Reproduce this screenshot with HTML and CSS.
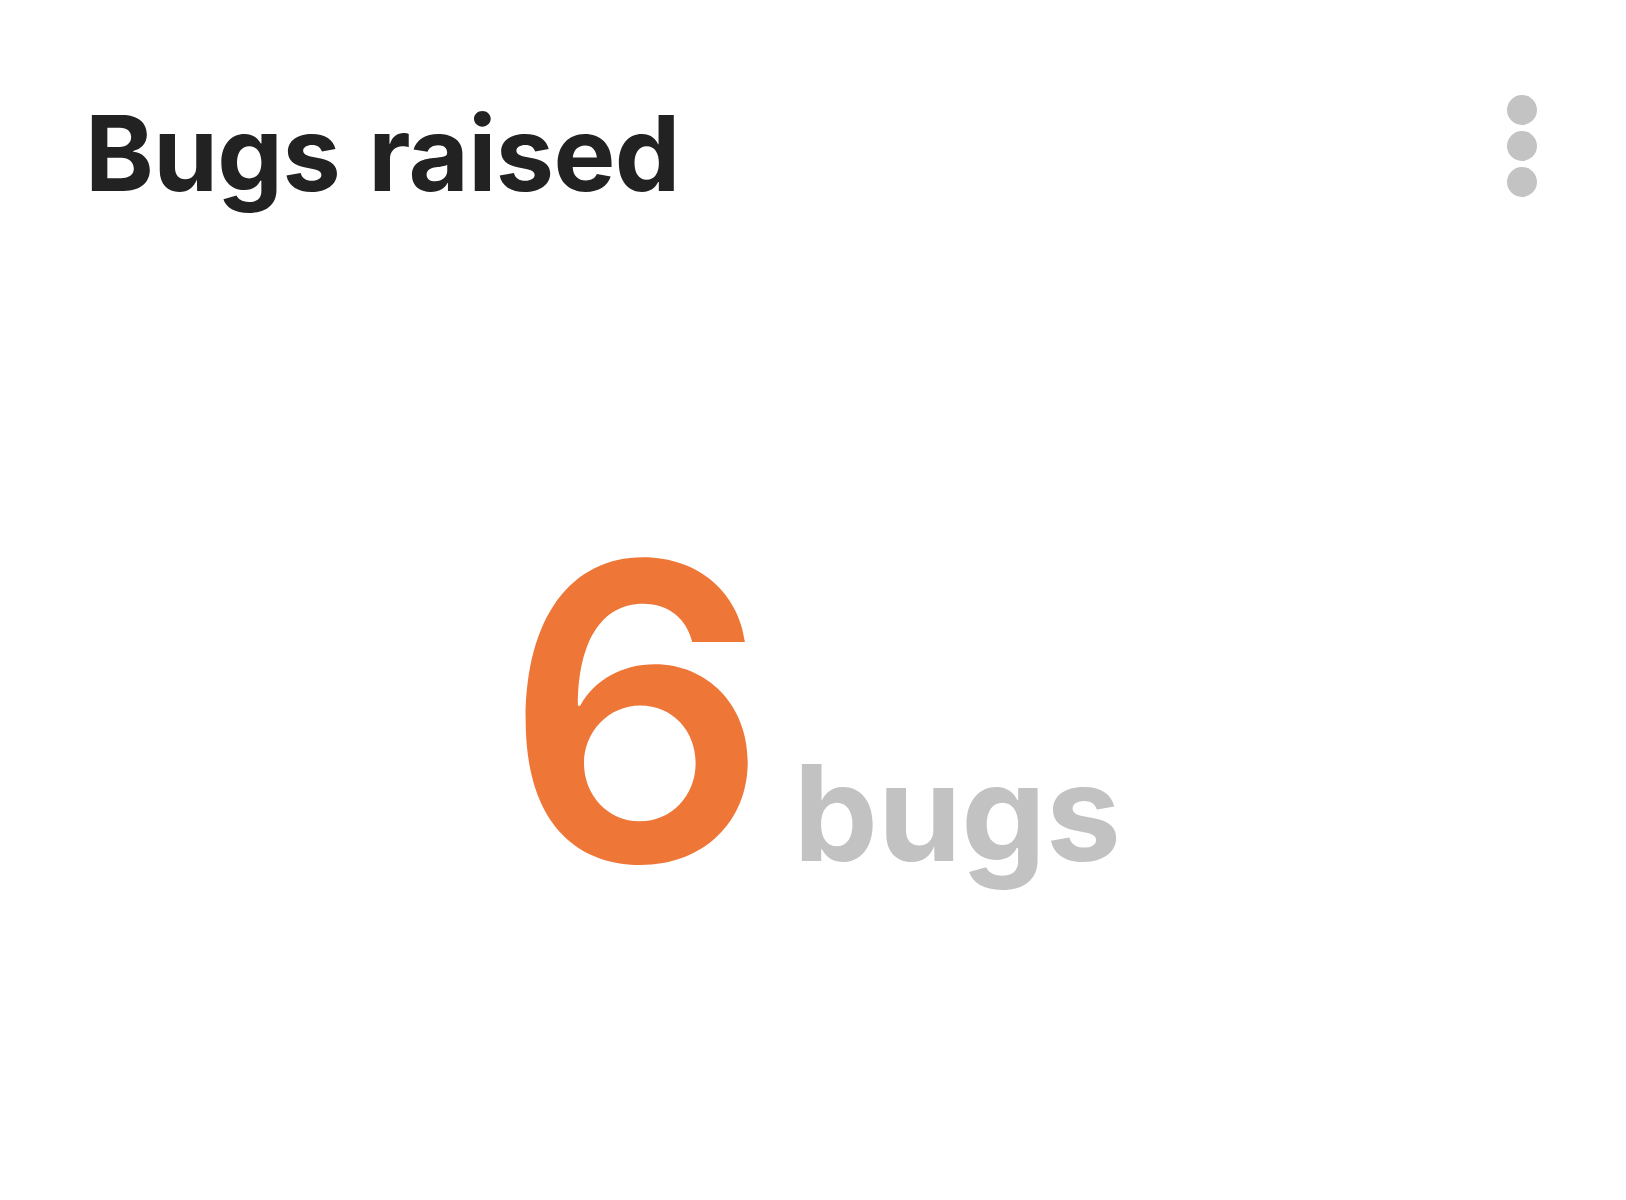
FILE: index.html
```html
<!DOCTYPE html>
<html lang="en">
<head>
<meta charset="utf-8">
<title>Bugs raised</title>
<link rel="stylesheet" href="styles.css">
</head>
<body>
<main class="card">
  <header class="card-header">
    <h1 class="card-title">Bugs raised</h1>
    <button class="menu-button" aria-label="More options">
      <span class="dot"></span>
      <span class="dot"></span>
      <span class="dot"></span>
    </button>
  </header>
  <section class="metric">
    <div class="metric-row">
      <span class="metric-value">6</span>
      <span class="metric-unit">bugs</span>
    </div>
  </section>
</main>
</body>
</html>
```
FILE: styles.css
```css
html, body {
  margin: 0;
  padding: 0;
  background: #ffffff;
}

body {
  font-family: Inter, "Noto Sans", sans-serif;
}

.card {
  box-sizing: border-box;
  width: 1626px;
  height: 1200px;
  padding: 95px 89px 90px 85px;
  display: flex;
  flex-direction: column;
}

.card-header {
  display: flex;
  justify-content: space-between;
  align-items: flex-start;
}

.card-title {
  margin: 6px 0 0 0;
  font-size: 104px;
  line-height: 1;
  font-weight: 700;
  color: #222222;
  letter-spacing: -0.6px;
  word-spacing: 4px;
}

.menu-button {
  border: 0;
  background: none;
  padding: 0;
  display: flex;
  flex-direction: column;
  gap: 6px;
}

.dot {
  display: block;
  width: 30px;
  height: 30px;
  border-radius: 50%;
  background: #c3c3c3;
}

.metric {
  flex: 1;
  display: flex;
  align-items: center;
  justify-content: center;
  padding-top: 106px;
  padding-left: 4px;
}

.metric-row {
  display: flex;
  align-items: baseline;
  gap: 25px;
}

.metric-value {
  font-size: 412px;
  line-height: 1;
  font-weight: 600;
  color: #ee7737;
}

.metric-unit {
  font-size: 134px;
  line-height: 1;
  font-weight: 700;
  color: #c2c2c2;
}
```
